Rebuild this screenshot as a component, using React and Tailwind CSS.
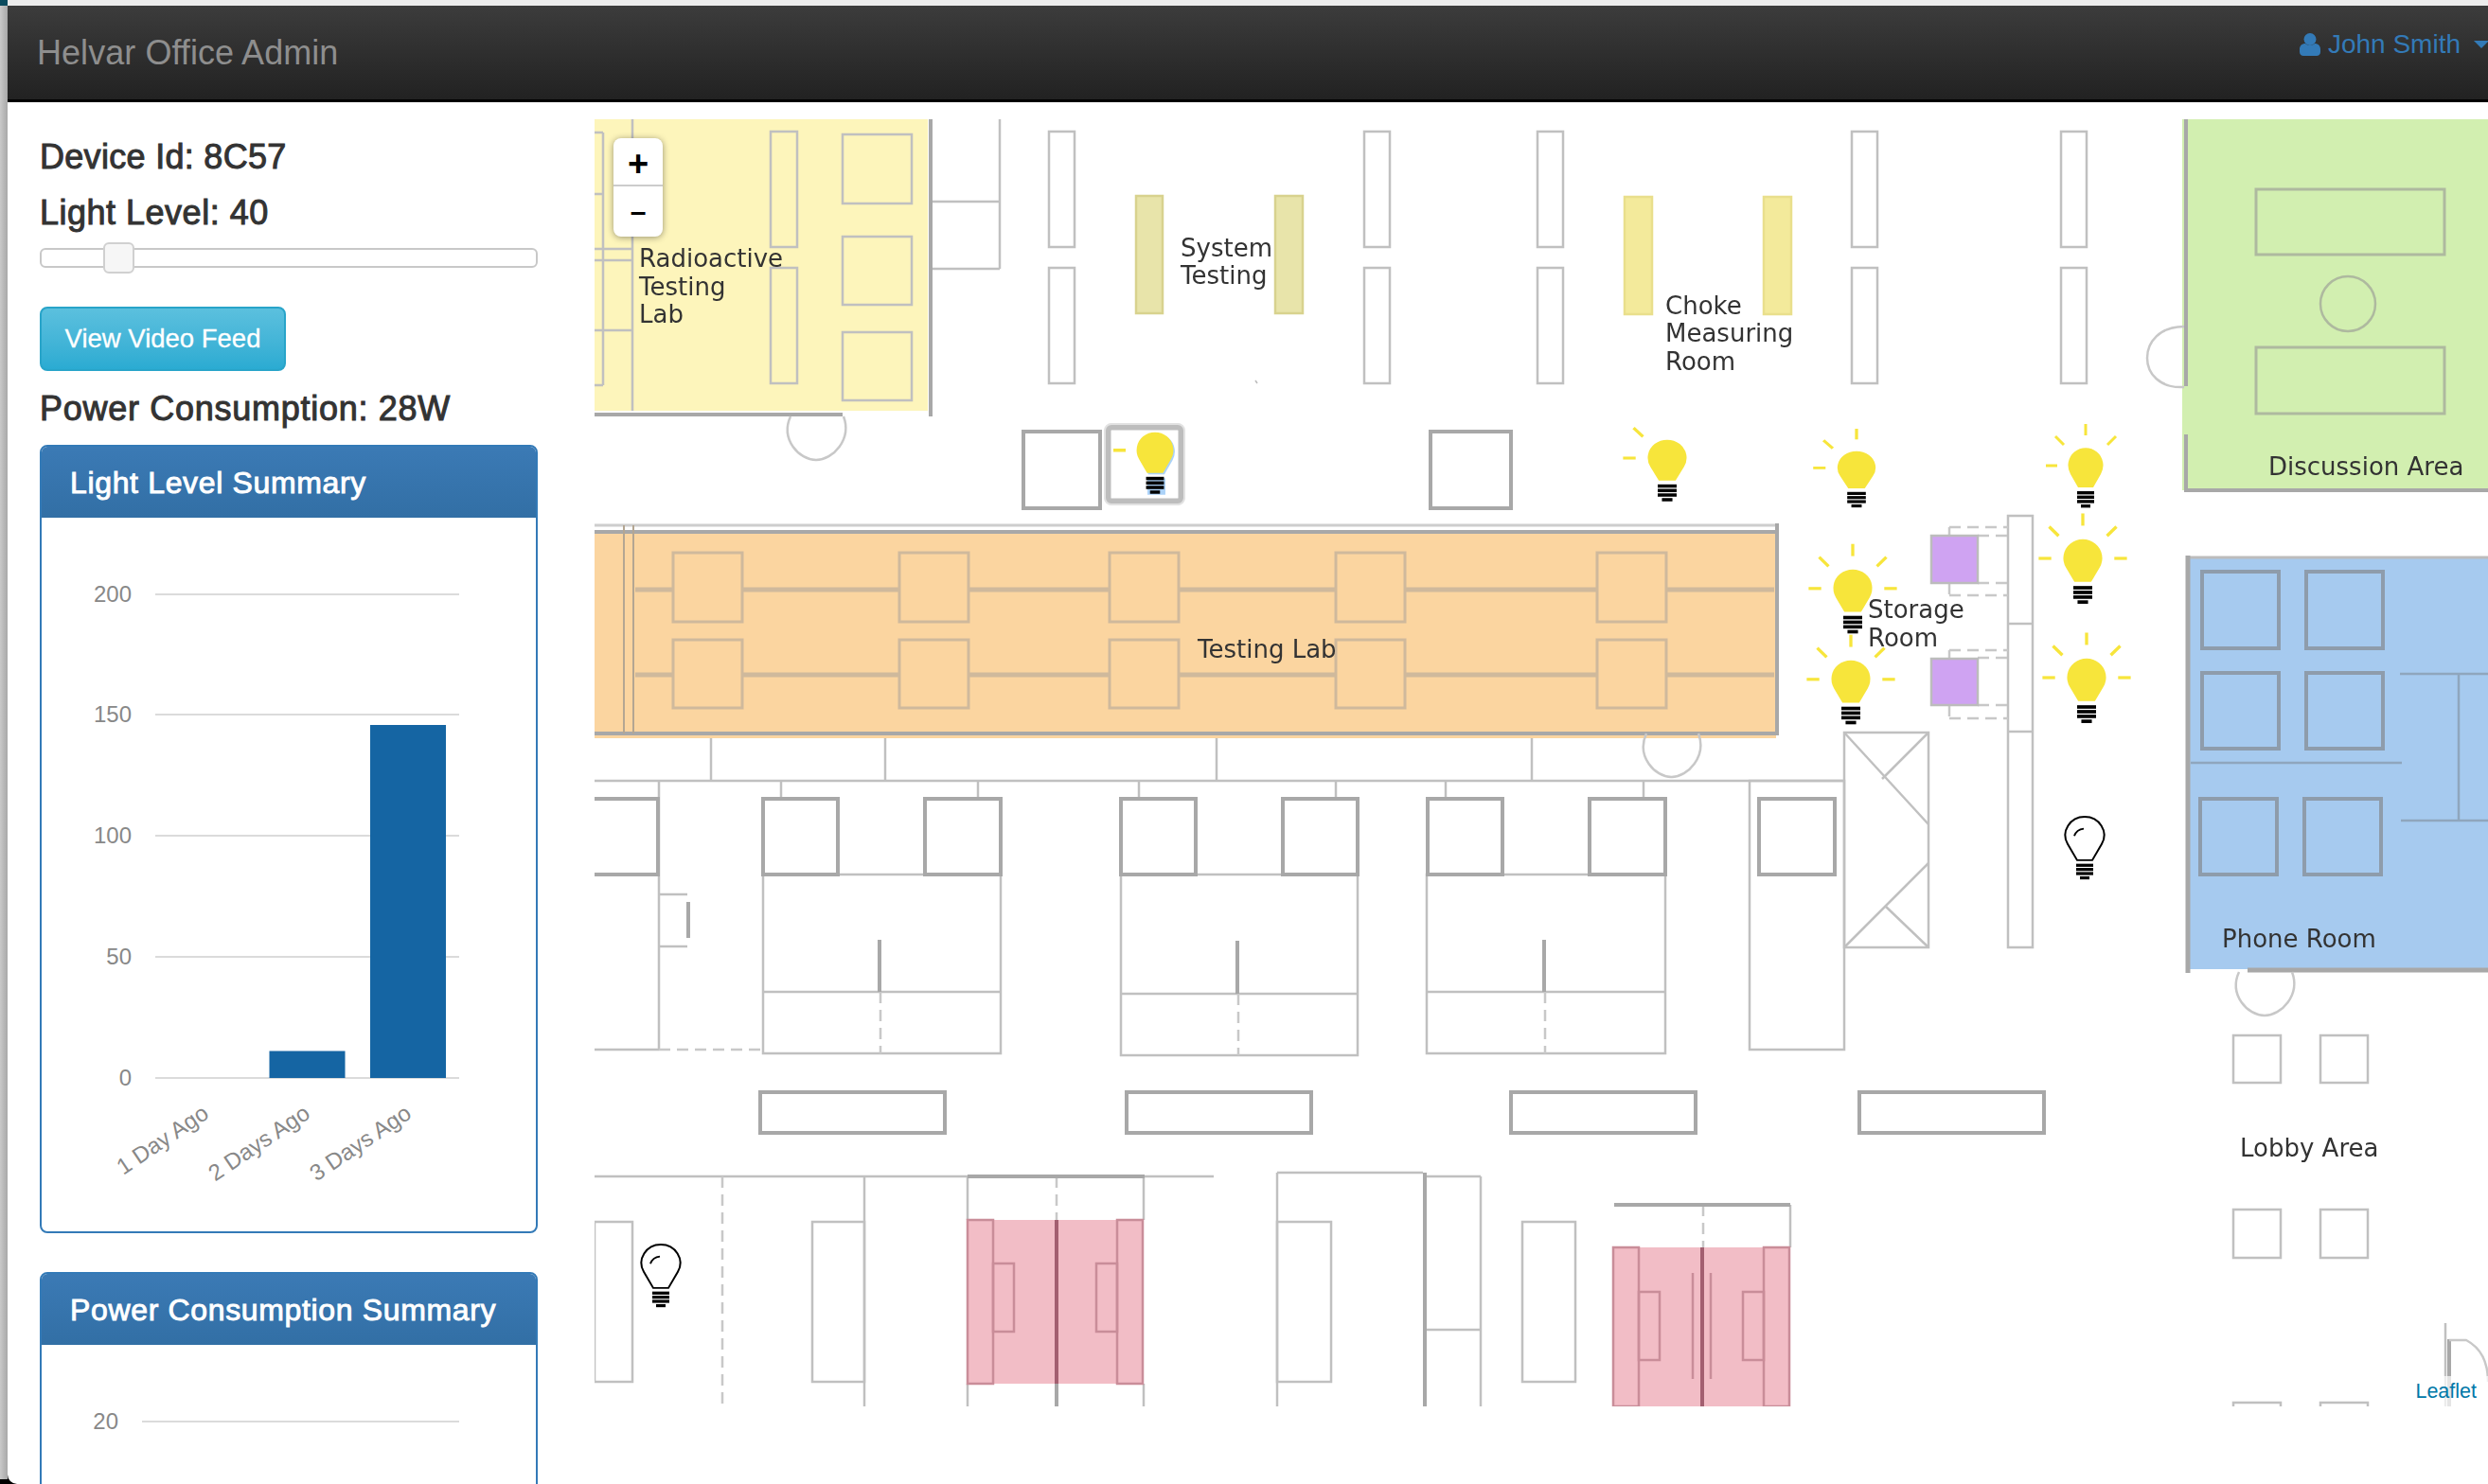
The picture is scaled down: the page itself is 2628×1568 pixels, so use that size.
import React from 'react';

const FONT = "font-['Liberation_Sans',Arial,sans-serif]";
const THIN = '#c0c0c0';
const THICK = '#a8a8a8';
const PLAN_FONT = "'DejaVu Sans', sans-serif";

// x1, y1, x2, y2 in page pixels
const narrowDesks = [1108, 1441, 1624, 1956, 2177].flatMap((x) => [[x, 139, x + 27, 261], [x, 283, x + 27, 405]]);
const thickBoxes = [
  [1081, 456, 1162, 537], [1511, 456, 1596, 537],
  [806, 844, 885, 924], [977, 844, 1057, 924], [1184, 844, 1263, 924], [1355, 844, 1434, 924],
  [1508, 844, 1587, 924], [1679, 844, 1759, 924], [1858, 844, 1938, 924],
  [803, 1154, 998, 1197], [1190, 1154, 1385, 1197], [1596, 1154, 1791, 1197], [1964, 1154, 2159, 1197],
];
const thinBoxes = [
  [814, 139, 842, 261], [814, 283, 842, 405],
  [890, 142, 963, 215], [890, 250, 963, 322], [890, 351, 963, 423],
  [806, 924, 1057, 1113], [1184, 924, 1434, 1115], [1507, 924, 1759, 1113], [1848, 825, 1948, 1109],
  [1948, 774, 2037, 1001], [2121, 545, 2147, 1001],
  [628, 1291, 668, 1460], [858, 1291, 913, 1460], [1349, 1291, 1406, 1460], [1608, 1291, 1664, 1460],
  [2359, 1094, 2409, 1144], [2451, 1094, 2501, 1144], [2359, 1278, 2409, 1329], [2451, 1278, 2501, 1329],
  [2359, 1482, 2409, 1500], [2451, 1482, 2501, 1500],
];
const thinLines = [
  [985, 213, 1056, 213], [985, 284, 1056, 284], [1056, 126, 1056, 284],
  [628, 825, 1948, 825], [751, 780, 751, 825], [935, 780, 935, 825], [1285, 780, 1285, 825], [1618, 780, 1618, 825],
  [825, 825, 825, 844], [1033, 825, 1033, 844], [1203, 825, 1203, 844], [1411, 825, 1411, 844], [1527, 825, 1527, 844], [1736, 825, 1736, 844],
  [696, 825, 696, 1109], [628, 1109, 696, 1109], [696, 945, 726, 945], [696, 1000, 726, 1000],
  [806, 1048, 1057, 1048], [1184, 1050, 1434, 1050], [1507, 1048, 1759, 1048],
  [1948, 774, 2037, 871], [2037, 774, 1988, 823], [1948, 1001, 2037, 912], [2037, 1001, 1991, 957],
  [2121, 659, 2147, 659], [2121, 773, 2147, 773],
  [628, 1243, 1282, 1243], [913, 1243, 913, 1486], [1022, 1243, 1022, 1289], [1208, 1243, 1208, 1289],
  [1022, 1462, 1022, 1486], [1208, 1462, 1208, 1486],
  [1349, 1239, 1503, 1239], [1349, 1239, 1349, 1486], [1564, 1243, 1564, 1486], [1505, 1243, 1564, 1243], [1505, 1405, 1564, 1405],
  [1891, 1273, 1891, 1318], [2583, 1398, 2583, 1486],
];
const thickLines = [
  [983, 126, 983, 440], [628, 438, 890, 438],
  [929, 993, 929, 1048], [1307, 994, 1307, 1050], [1631, 993, 1631, 1048], [727, 953, 727, 991],
  [1022, 1243, 1209, 1243], [1505, 1239, 1505, 1486], [1116, 1462, 1116, 1486], [1705, 1273, 1891, 1273],
  [2587, 1415, 2587, 1486],
];
const dashed = [
  [696, 1109, 806, 1109], [930, 1048, 930, 1113], [1308, 1050, 1308, 1115], [1632, 1048, 1632, 1113],
  [763, 1243, 763, 1486], [1116, 1243, 1116, 1289], [1799, 1273, 1799, 1318],
  [2059, 557, 2121, 557], [2059, 557, 2059, 566], [2059, 629, 2121, 629], [2059, 616, 2059, 629], [2089, 566, 2121, 566], [2089, 616, 2121, 616],
  [2059, 687, 2121, 687], [2059, 687, 2059, 696], [2059, 759, 2121, 759], [2059, 745, 2059, 759], [2089, 695, 2121, 695], [2089, 745, 2121, 745],
];
const orangeXs = [711, 950, 1172, 1411, 1687];
const blueBoxes = [
  [2326, 604, 2407, 685], [2436, 604, 2517, 685], [2326, 711, 2407, 791], [2436, 711, 2517, 791],
  [2324, 844, 2405, 924], [2434, 844, 2515, 924],
];
const labels = [
  ['Radioactive', 675, 282], ['Testing', 675, 312], ['Lab', 675, 341],
  ['System', 1247, 271], ['Testing', 1247, 300],
  ['Choke', 1759, 332], ['Measuring', 1759, 361], ['Room', 1759, 391],
  ['Testing Lab', 1265, 695], ['Discussion Area', 2396, 502],
  ['Storage', 1973, 653], ['Room', 1973, 683],
  ['Phone Room', 2347, 1001], ['Lobby Area', 2366, 1222],
];
// t top, a upper left, l left, b upper right, r right; then x and y scale of the icon
const litBulbs = [
  [1761, 484, 'al', 1.11, 1.03], [1961, 494.4, 'tal', 1.09, 0.94], [2203, 492, 'tabl', 1, 1], [2200, 590, 'tablr', 1.11, 1.08],
  [1957, 621.8, 'tablr', 1.11, 1.07], [1955, 717.8, 'tablr', 1.11, 1.07], [2204, 716, 'tablr', 1.11, 1.08],
];

function Box({ b, stroke = THIN, fill = 'none', width = 2.5 }) {
  return <rect x={b[0]} y={b[1]} width={b[2] - b[0]} height={b[3] - b[1]} fill={fill} stroke={stroke} strokeWidth={width} />;
}

function Line({ l, stroke = THIN, width = 2.5, dash }) {
  return <line x1={l[0]} y1={l[1]} x2={l[2]} y2={l[3]} stroke={stroke} strokeWidth={width} strokeDasharray={dash} />;
}

function Door({ x1, x2, y }) {
  const mid = (x1 + x2) / 2;
  return (
    <path
      d={`M${x1 + 5} ${y} C${x1 - 6} ${y + 24} ${x1 + 14} ${y + 46} ${mid} ${y + 46} C${x2 - 14} ${y + 46} ${x2 + 6} ${y + 24} ${x2 - 3} ${y}`}
      fill="none" stroke="#c8c8c8" strokeWidth="2.5"
    />
  );
}

function BulbBase() {
  return (
    <g fill="#000">
      <rect x="-9" y="27" width="18" height="3.4" />
      <rect x="-9" y="31.6" width="18" height="3.4" />
      <rect x="-9" y="36.2" width="18" height="3.4" />
      <rect x="-5" y="41" width="10" height="3.4" />
    </g>
  );
}

function LitBulb({ x, y, rays, sx = 1, sy = 1 }) {
  return (
    <g transform={`translate(${x} ${y}) scale(${sx} ${sy})`}>
      <g stroke="#f7e53b" strokeWidth="3">
        {rays.includes('t') && <line x1="0" y1="-44" x2="0" y2="-32" />}
        {rays.includes('a') && <line x1="-32" y1="-31" x2="-23" y2="-22" />}
        {rays.includes('b') && <line x1="32" y1="-31" x2="23" y2="-22" />}
        {rays.includes('l') && <line x1="-42" y1="0" x2="-30" y2="0" />}
        {rays.includes('r') && <line x1="42" y1="0" x2="30" y2="0" />}
      </g>
      <path d="M-8 23 L-16 9 A18.5 18.5 0 1 1 16 9 L8 23 Z" fill="#f7e53b" />
      <BulbBase />
    </g>
  );
}

function OffBulb({ x, y }) {
  return (
    <g transform={`translate(${x} ${y}) scale(1 0.95)`}>
      <path d="M-8 23 L-18 5 A20.5 20.5 0 1 1 18 5 L8 23 Z" fill="none" stroke="#000" strokeWidth="2" />
      <path d="M-11 -4 A12 12 0 0 1 -1 -12" fill="none" stroke="#000" strokeWidth="2" />
      <BulbBase />
    </g>
  );
}

function PinkRoom({ x1, x2, y1, y2, mid, smallY, lines }) {
  return (
    <g>
      <rect x={x1} y={y1} width={x2 - x1} height={y2 - y1} fill="#f2bdc6" />
      <g fill="none" stroke="#c98d99" strokeWidth="2.5">
        <rect x={x1} y={y1} width="27" height={y2 - y1} />
        <rect x={x2 - 27} y={y1} width="27" height={y2 - y1} />
        <rect x={x1 + 27} y={smallY} width="22" height="72" />
        <rect x={x2 - 49} y={smallY} width="22" height="72" />
        {lines && <line x1={mid - 10} y1="1345" x2={mid - 10} y2="1457" />}
        {lines && <line x1={mid + 9} y1="1345" x2={mid + 9} y2="1457" />}
      </g>
      <line x1={mid} y1={y1} x2={mid} y2={y2} stroke="#a35f70" strokeWidth="4" />
    </g>
  );
}

function FloorPlan() {
  return (
    <svg viewBox="628 126 2000 1360" width="2000" height="1360" className="block">
      <g className="[filter:blur(0.7px)]">
        <rect x="628" y="126" width="352" height="308" fill="#fdf5bb" />
        <rect x="2305" y="126" width="323" height="392" fill="#d2efb0" />
        <rect x="2311" y="589" width="317" height="435" fill="#a6caef" />
        <rect x="628" y="564" width="1248" height="216" fill="#fbd5a0" />

        <g fill="none" stroke={THIN} strokeWidth="2.5">
          <path d="M668 126 V434 M637 140 V407 M628 140 H637 M628 205 H637 M628 263 H668 M628 275 H668 M628 349 H668 M628 407 H637" />
        </g>
        {thinBoxes.map((b) => <Box key={b.join()} b={b} />)}
        {narrowDesks.map((b) => <Box key={b.join()} b={b} />)}
        {thinLines.map((l) => <Line key={l.join()} l={l} />)}
        {dashed.map((l) => <Line key={l.join()} l={l} dash="12 7" stroke="#c8c8c8" />)}
        {thickBoxes.map((b) => <Box key={b.join()} b={b} stroke={THICK} width={4} />)}
        <path d="M628 844 H695 V924 H628" fill="none" stroke={THICK} strokeWidth="4" />
        {thickLines.map((l) => <Line key={l.join()} l={l} stroke={THICK} width={4} />)}

        <Box b={[1200, 207, 1228, 331]} fill="#e8e4aa" stroke="#d8d28e" />
        <Box b={[1347, 207, 1376, 331]} fill="#e8e4aa" stroke="#d8d28e" />
        <Box b={[1716, 208, 1745, 332]} fill="#f3ea9b" stroke="#e9df8c" />
        <Box b={[1863, 208, 1892, 332]} fill="#f3ea9b" stroke="#e9df8c" />
        <line x1="1326" y1="402" x2="1328" y2="405" stroke="#bbb" strokeWidth="1.5" />

        {/* testing lab */}
        <path d="M628 555 H1879" stroke="#cdcdcd" strokeWidth="3" />
        <path d="M628 562 H1879 M628 775 H1879 M1877 553 V775" fill="none" stroke={THICK} strokeWidth="4" />
        <path d="M659 555 V775 M669 555 V775" stroke="#b4a692" strokeWidth="2" />
        <path d="M671 623 H1874 M671 713 H1874" stroke="#cfb99c" strokeWidth="5" />
        {orangeXs.flatMap((x) => [
          <Box key={`${x}a`} b={[x, 584, x + 73, 657]} fill="#fbd5a0" stroke="#cfb99c" width={3} />,
          <Box key={`${x}b`} b={[x, 676, x + 73, 748]} fill="#fbd5a0" stroke="#cfb99c" width={3} />,
        ])}

        {/* discussion area */}
        <path d="M2309 126 V408 M2309 459 V518 H2628" fill="none" stroke={THICK} strokeWidth="4" />
        <Box b={[2383, 200, 2582, 269]} stroke="#aeb99f" width={3} />
        <Box b={[2383, 367, 2582, 437]} stroke="#aeb99f" width={3} />
        <circle cx="2480" cy="321" r="29" fill="none" stroke="#aeb99f" strokeWidth="2.5" />
        <path d="M2307 345 C2255 345 2255 412 2307 409" fill="none" stroke="#c8c8c8" strokeWidth="2.5" />

        {/* phone room */}
        <path d="M2311 589 H2628" stroke="#bcbcbc" strokeWidth="3" />
        <path d="M2311 587 V1028 M2374 1025 H2628" fill="none" stroke={THICK} strokeWidth="5" />
        {blueBoxes.map((b) => <Box key={b.join()} b={b} stroke="#8e9cab" width={4} />)}
        <path d="M2314 806 H2537 M2535 712 H2628 M2597 712 V867 M2536 867 H2628" fill="none" stroke="#8fa6bd" strokeWidth="2.5" />

        <Door x1={830} x2={894} y={440} />
        <Door x1={1734} x2={1797} y={775} />
        <Door x1={2360} x2={2424} y={1027} />
        <path d="M2587 1416 H2605 C2622 1425 2628 1440 2628 1460" fill="none" stroke="#c8c8c8" strokeWidth="2.5" />

        {/* storage */}
        <Box b={[2040, 566, 2089, 616]} fill="#cfa3f2" stroke="#bcbcbc" />
        <Box b={[2040, 696, 2089, 745]} fill="#cfa3f2" stroke="#bcbcbc" />

        <PinkRoom x1={1022} x2={1207} y1={1289} y2={1462} mid={1116} smallY={1335} />
        <PinkRoom x1={1704} x2={1890} y1={1318} y2={1486} mid={1798} smallY={1365} lines />

        {labels.map(([t, x, y]) => (
          <text key={t + x + y} x={x} y={y} fontFamily={PLAN_FONT} fontSize="26" fill="#333">{t}</text>
        ))}
      </g>

      {/* lights */}
      {litBulbs.map(([x, y, rays, sx, sy]) => <LitBulb key={x + '-' + y} x={x} y={y} rays={rays} sx={sx} sy={sy} />)}
      <OffBulb x={2202} y={887} />
      <OffBulb x={698} y={1339} />

      {/* selected light */}
      <rect x="1170" y="451" width="78" height="79" rx="4" fill="#fff" stroke="#bdbdbd" strokeWidth="7" />
      <rect x="1167" y="448" width="84" height="85" rx="7" fill="none" stroke="#e2e2e2" strokeWidth="2" />
      <g transform="translate(1221.5 477.5) scale(1.05 1.03)" opacity="0.75">
        <path d="M-8 23 L-16 9 A18.5 18.5 0 1 1 16 9 L8 23 Z M-9 27 H9 V44 H-9 Z" fill="#8fc3f5" />
      </g>
      <rect x="1176" y="474" width="13" height="3.5" fill="#f7e53b" />
      <LitBulb x={1220} y={476} rays="" sx={1.05} sy={1.03} />
    </svg>
  );
}

function ChartGrid({ ticks, x1, labelX }) {
  return ticks.map(([label, y]) => (
    <g key={label}>
      <line x1={x1} y1={y} x2="485" y2={y} stroke="#cfcfcf" strokeWidth="1.5" />
      <text x={labelX} y={y + 8} textAnchor="end" fontSize="24" fill="#888" fontFamily="'Liberation Sans', Arial, sans-serif">{label}</text>
    </g>
  ));
}

function LightChart() {
  return (
    <svg viewBox="44 547 522 754" width="522" height="754" className="block">
      <ChartGrid ticks={[['200', 628], ['150', 755], ['100', 883], ['50', 1011], ['0', 1139]]} x1={164} labelX={139} />
      <rect x="284.5" y="1110.5" width="80" height="28.5" fill="#1565a3" />
      <rect x="391" y="766" width="80" height="373" fill="#1565a3" />
      {[['1 Day Ago', 222], ['2 Days Ago', 329], ['3 Days Ago', 436]].map(([t, x]) => (
        <text
          key={t} transform={`rotate(-34 ${x} 1180)`} x={x} y="1180" textAnchor="end"
          fontSize="24" fill="#888" fontFamily="'Liberation Sans', Arial, sans-serif"
        >{t}</text>
      ))}
    </svg>
  );
}

function PowerChart() {
  return (
    <svg viewBox="44 1421 522 200" width="522" height="200" className="block">
      <ChartGrid ticks={[['20', 1502]]} x1={150} labelX={125} />
    </svg>
  );
}

function Panel({ title, children, className }) {
  return (
    <div className={`rounded-lg border-2 border-[#337ab7] bg-white overflow-hidden ${className}`}>
      <div className="h-[75px] flex items-center pl-[30px] bg-gradient-to-b from-[#3b7ab5] to-[#326fa5] text-white text-[32px] tracking-[0.65px] [-webkit-text-stroke:0.9px]">
        {title}
      </div>
      {children}
    </div>
  );
}

export default function App() {
  return (
    <div className={`relative w-[2628px] h-[1568px] overflow-hidden flex flex-col bg-[#ececec] text-[#333] ${FONT}`}>
      <div className="h-[6px] shrink-0 flex">
        <div className="w-[8px] bg-[#0b4b5e]" />
      </div>
      <div className="flex-1 flex min-h-0 bg-black">
        <div className="w-[8px] shrink-0 mb-[5px] bg-gradient-to-r from-[#c9c9c9] to-[#a8a8a8]" />
        <div className="flex-1 flex flex-col min-w-0 bg-white rounded-bl-[10px] overflow-hidden">
          <nav className="h-[102px] shrink-0 flex items-start justify-between bg-gradient-to-b from-[#3c3c3c] to-[#222] border-b-[3px] border-black">
            <span className="mt-[30px] ml-[31px] text-[36px] leading-[40px] tracking-[0.05px] text-[#8e8e8e]">Helvar Office Admin</span>
            <div className="mt-[23px] flex items-center text-[28px] leading-[36px] text-[#337ab7]">
              <svg viewBox="0 0 22 24" width="22" height="24" className="mr-[8px]">
                <circle cx="11" cy="6.5" r="6.5" fill="#337ab7" />
                <path d="M0 20 V17 C0 13 3 11 6 11 C8.5 13.5 13.5 13.5 16 11 C19 11 22 13 22 17 V20 C22 22.5 20 24 18 24 H4 C2 24 0 22.5 0 20 Z" fill="#337ab7" />
              </svg>
              <span>John Smith</span>
              <span className="ml-[14px] mr-[-1px] w-0 h-0 border-x-[8px] border-x-transparent border-t-[8px] border-t-[#337ab7]" />
            </div>
          </nav>

          <div className="flex-1 flex min-h-0">
            <aside className="w-[620px] shrink-0 pl-[34px] pr-[60px] pt-[38px] overflow-hidden">
              <div className="text-[36px] leading-[40px] tracking-[0.3px] [-webkit-text-stroke:1px]">Device Id: 8C57</div>
              <div className="mt-[19px] text-[36px] leading-[40px] tracking-[0.5px] [-webkit-text-stroke:1px]">Light Level: 40</div>
              <div className="relative mt-[17px] h-[21px] rounded-md border-2 border-[#c8c8c8] bg-white">
                <div className="absolute left-[65px] top-[-8px] w-[33px] h-[33px] rounded-md border-2 border-[#d0d0d0] bg-[#f6f6f6]" />
              </div>
              <button className="mt-[41px] w-[260px] h-[68px] rounded-lg border-2 border-[#28a4c9] bg-gradient-to-b from-[#5bc0de] to-[#2aabd2] text-white text-[27.5px] [-webkit-text-stroke:0.3px]">
                View Video Feed
              </button>
              <div className="mt-[20px] text-[36px] leading-[40px] tracking-[0.72px] [-webkit-text-stroke:1px]">Power Consumption: 28W</div>
              <Panel title="Light Level Summary" className="mt-[18px] h-[833px]">
                <LightChart />
              </Panel>
              <Panel title="Power Consumption Summary" className="mt-[41px]">
                <PowerChart />
              </Panel>
            </aside>

            <main className="flex-1 min-w-0 pt-[18px]">
              <div className="relative w-[2000px] h-[1360px] overflow-hidden">
                <FloorPlan />
                <div className="absolute left-[20px] top-[20px] w-[52px] h-[104px] rounded-lg bg-white shadow-[0_1px_7px_rgba(0,0,0,0.4)] flex flex-col">
                  <div className="h-[51px] pt-[4px] flex items-center justify-center border-b-2 border-[#ccc] text-black text-[38px] leading-none font-bold">+</div>
                  <div className="flex-1 flex items-center justify-center text-black text-[30px] leading-none font-bold">–</div>
                </div>
                <div className="absolute right-0 bottom-0 h-[32px] pl-[4px] pr-[12px] bg-white/70 text-[21.5px] leading-[32px] text-[#0078a8]">Leaflet</div>
              </div>
            </main>
          </div>
        </div>
      </div>
    </div>
  );
}
